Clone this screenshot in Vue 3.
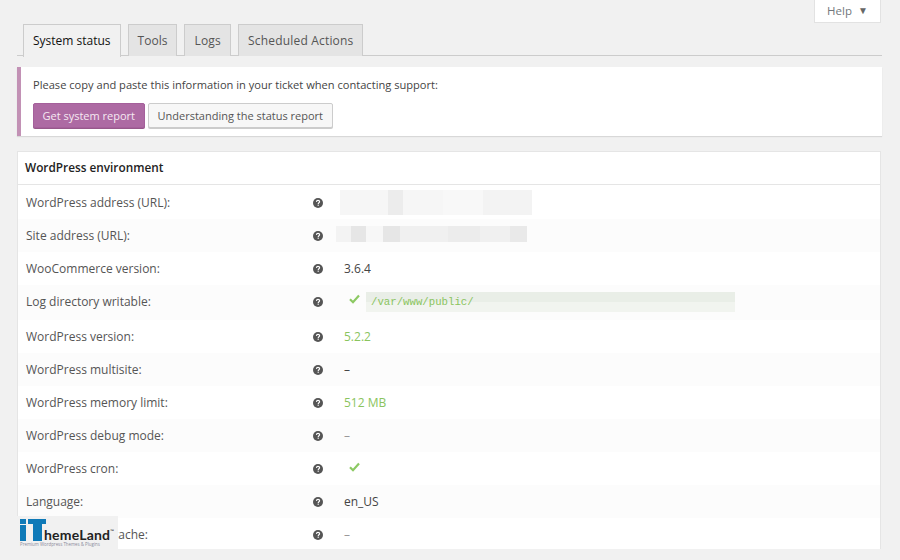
<script setup>
const rows = [
  { label: 'WordPress address (URL):', kind: 'blur1' },
  { label: 'Site address (URL):', kind: 'blur2' },
  { label: 'WooCommerce version:', value: '3.6.4' },
  { label: 'Log directory writable:', kind: 'log', tall: true },
  { label: 'WordPress version:', value: '5.2.2', tone: 'good' },
  { label: 'WordPress multisite:', value: '–' },
  { label: 'WordPress memory limit:', value: '512 MB', tone: 'good' },
  { label: 'WordPress debug mode:', value: '–', tone: 'muted' },
  { label: 'WordPress cron:', kind: 'check' },
  { label: 'Language:', value: 'en_US' },
  { label: 'External object cache:', value: '–', tone: 'muted' }
]
const blur1 = [
  [48, '#f6f6f6'], [15, '#ececec'], [40, '#f6f6f6'], [40, '#f8f8f8'], [49, '#f3f3f3']
]
const blur2 = [
  [15, '#f3f3f3'], [15, '#e6e6e6'], [17, '#f7f7f7'], [17, '#e6e6e6'], [48, '#f0f0f0'], [32, '#ececec'], [30, '#f0f0f0'], [17, '#e9e9e9']
]
</script>

<template>
  <div class="page">
    <div class="help-bar">
      <div class="help">Help <span class="caret">▼</span></div>
    </div>
    <nav class="tabs">
      <a class="tab active">System status</a>
      <a class="tab">Tools</a>
      <a class="tab">Logs</a>
      <a class="tab">Scheduled Actions</a>
    </nav>
    <section class="notice">
      <p>Please copy and paste this information in your ticket when contacting support:</p>
      <div class="actions">
        <button class="btn primary">Get system report</button>
        <button class="btn">Understanding the status report</button>
      </div>
    </section>
    <section class="table">
      <h2>WordPress environment</h2>
      <div v-for="(r, i) in rows" :key="r.label" class="row" :class="{ odd: i % 2 === 1, tall: r.tall }">
        <div class="label">{{ r.label }}</div>
        <div class="q">
          <svg width="10" height="10" viewBox="0 0 10 10">
            <circle cx="5" cy="5" r="5" fill="#555" />
            <path d="M3.4 3.9C3.5 2.9 4.1 2.4 5 2.4C5.9 2.4 6.6 2.9 6.6 3.7C6.6 4.7 5.2 4.8 5.2 5.9" fill="none" stroke="#fff" stroke-width="1.1" />
            <rect x="4.6" y="6.6" width="1.2" height="1.2" fill="#fff" />
          </svg>
        </div>
        <div class="value" :class="r.tone">
          <div v-if="r.kind === 'blur1'" class="blur b1">
            <span v-for="(b, j) in blur1" :key="j" :style="{ width: b[0] + 'px', background: b[1] }"></span>
          </div>
          <div v-else-if="r.kind === 'blur2'" class="blur b2">
            <span v-for="(b, j) in blur2" :key="j" :style="{ width: b[0] + 'px', background: b[1] }"></span>
          </div>
          <div v-else-if="r.kind === 'log'" class="log">
            <svg class="check" width="11" height="10" viewBox="0 0 11 10"><path d="M1 5.2L4 8.2L10 1.6" fill="none" stroke="#8cc963" stroke-width="2.2" /></svg>
            <code>/var/www/public/</code>
          </div>
          <svg v-else-if="r.kind === 'check'" class="check solo" width="11" height="10" viewBox="0 0 11 10"><path d="M1 5.2L4 8.2L10 1.6" fill="none" stroke="#8cc963" stroke-width="2.2" /></svg>
          <template v-else>{{ r.value }}</template>
        </div>
      </div>
    </section>
    <div class="logo">
      <svg width="26" height="22" viewBox="0 0 26 22">
        <rect x="0" y="0" width="6" height="5" fill="#0f7ab8" />
        <rect x="0" y="6" width="6" height="16" fill="#0f7ab8" />
        <rect x="8" y="0" width="18" height="5" fill="#0f7ab8" />
        <rect x="13" y="5" width="9" height="17" fill="#0f7ab8" />
      </svg>
      <div class="brand">hemeLand<sup>™</sup></div>
      <div class="tag">Premium Wordpress Themes &amp; Plugins</div>
    </div>
  </div>
</template>

<style scoped>
.page {
  position: relative;
  height: 560px;
  width: 900px;
  overflow: hidden;
  background: #f1f1f1;
  padding: 0 18px 0 17px;
  box-sizing: border-box;
  font-family: "Open Sans", "Liberation Sans", sans-serif;
  font-size: 12px;
  color: #444;
}
.help-bar { display: flex; justify-content: flex-end; height: 24px; padding-right: 1px; }
.help {
  width: 67px;
  height: 23px;
  box-sizing: border-box;
  background: #fff;
  border: 1px solid #e2e2e2;
  border-top: 0;
  text-align: center;
  font-size: 11.5px;
  line-height: 21px;
  color: #72777c;
}
.caret { font-size: 10px; color: #666; margin-left: 3px; vertical-align: 1px; }
.tabs {
  display: flex;
  gap: 7px;
  height: 31px;
  padding-left: 6px;
  border-bottom: 1px solid #ccc;
}
.tab {
  height: 31px;
  padding: 0 9px;
  background: #e4e4e4;
  border: 1px solid #ccc;
  border-bottom: 0;
  line-height: 31px;
  color: #555;
}
.tab:nth-child(3) { letter-spacing: .25px; }
.tab:last-child { letter-spacing: .18px; }
.tab.active { background: #f1f1f1; color: #111; height: 32px; }
.notice {
  margin-top: 11px;
  height: 69px;
  box-sizing: border-box;
  background: #fff;
  border-left: 4px solid #c291b5;
  padding: 10px 12px;
  box-shadow: 0 1px 1px rgba(0, 0, 0, .1);
}
.notice p { margin: 0; line-height: 16px; font-size: 11.1px; color: #444; }
.actions { display: flex; gap: 3px; margin-top: 10px; }
.btn {
  height: 25px;
  padding: 0 9px;
  box-sizing: border-box;
  background: #f7f7f7;
  border: 1px solid #ccc;
  border-radius: 2px;
  box-shadow: 0 1px 0 #ccc;
  font: inherit;
  font-size: 11px;
  color: #555;
}
.btn.primary {
  padding: 0 8.5px;
  background: #ad6aa3;
  border-color: #a5609b;
  box-shadow: 0 1px 0 #96588a;
  color: #f5e9f2;
}
.table {
  margin-top: 15px;
  width: 864px;
  height: 398px;
  overflow: hidden;
  background: #fff;
  border: 1px solid #e5e5e5;
  border-width: 1px 1px 0 1px;
  box-sizing: border-box;
}
h2 {
  margin: 0 0 1px;
  height: 33px;
  box-sizing: border-box;
  padding-left: 7px;
  border-bottom: 1px solid #e5e5e5;
  font-size: 11.8px;
  font-weight: 600;
  line-height: 31px;
  color: #222;
}
.row {
  display: grid;
  grid-template-columns: 295px 31px 1fr;
  height: 33px;
  align-items: center;
  background: #fff;
}
.row.odd { background: #fcfcfc; }
.row.tall { height: 35px; padding-bottom: 2px; box-sizing: border-box; }
.label { padding-left: 8px; color: #555; }
.q { display: flex; }
.value { color: #444; }
.value.good { color: #8ac45e; }
.value.muted { color: #999; }
.blur { display: flex; }
.blur span { display: block; height: 100%; }
.b1 { height: 25px; margin-left: -4px; margin-top: -1px; }
.b2 { height: 16px; margin-left: -8px; margin-top: -3px; }
.log { display: flex; align-items: center; gap: 6px; padding-left: 5px; }
.check { flex: none; margin-bottom: 6px; }
.check.solo { margin: 0 0 4px 5px; display: block; }
code {
  display: block;
  width: 369px;
  height: 20px;
  box-sizing: border-box;
  padding-left: 5px;
  background: linear-gradient(#e9eee7 0 50%, #f1f4ef 50% 100%);
  font-family: "Liberation Mono", "DejaVu Sans Mono", monospace;
  font-size: 10.7px;
  line-height: 20px;
  color: #8ac45e;
}
.logo {
  position: absolute;
  left: 15px;
  top: 516px;
  width: 103px;
  height: 36px;
  background: #f1f1f1;
}
.logo svg { position: absolute; left: 5px; top: 3px; }
.brand {
  position: absolute;
  left: 29px;
  top: 12px;
  font-family: Lato, "Liberation Sans", sans-serif;
  font-size: 14px;
  font-weight: 700;
  line-height: 14px;
  letter-spacing: .2px;
  color: #222;
  white-space: nowrap;
}
.brand sup { font-size: 5px; font-weight: 400; vertical-align: 7px; line-height: 0; }
.tag {
  position: absolute;
  left: 5px;
  top: 25px;
  font-size: 4.4px;
  line-height: 6px;
  color: #8a8a9a;
  white-space: nowrap;
}
</style>
